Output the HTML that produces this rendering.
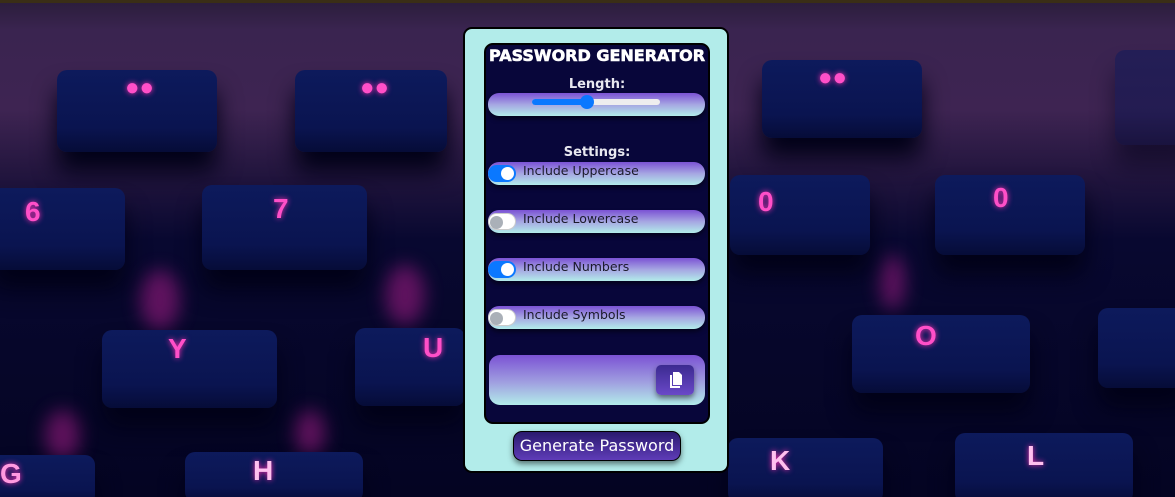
<!DOCTYPE html>
<html><head><meta charset="utf-8"><style>
*{box-sizing:border-box;margin:0;padding:0}
html{background:#050525;width:1175px;height:497px;overflow:hidden}
body{width:1175px;height:497px;overflow:hidden;position:relative;font-family:"Liberation Sans",sans-serif;
background:linear-gradient(180deg,#2a1d3a 0,#3a2450 30px,#3e2452 110px,#24163f 170px,#080830 240px,#040422 497px);}
.strip{position:absolute;left:0;top:0;width:1175px;height:3px;background:#3a2e16}
.k{position:absolute;border-radius:10px;background:linear-gradient(180deg,#0d1a5c 0,#0a1450 70%,#060c38 100%);box-shadow:0 20px 24px #020218}
.l{position:absolute;color:#ff4fc8;font-weight:bold;font-size:28px;text-shadow:0 0 6px #ff2fb0;font-family:"Liberation Sans",sans-serif}
.g{position:absolute;background:#9a1a80;filter:blur(9px);opacity:.6;border-radius:50%}
.card{position:absolute;left:463px;top:27px;width:266px;height:446px;background:#b2ecea;border:2px solid #000;border-radius:9px}
.panel{position:absolute;left:19px;top:14px;width:226px;height:381px;background:#08063a;border:2px solid #000;border-radius:9px}
.title{position:absolute;left:0;width:100%;top:1px;text-align:center;color:#fff;font-weight:900;font-size:16px;letter-spacing:0;font-family:"DejaVu Sans",sans-serif;-webkit-text-stroke:.6px #fff}
.lab{position:absolute;left:0;width:100%;text-align:center;color:#e8e8f0;font-weight:bold;font-size:13px;font-family:"DejaVu Sans",sans-serif}
.bar{position:absolute;left:2px;width:217px;height:23px;border-radius:11px;background:linear-gradient(180deg,#7b52d4 0,#a6a6e2 50%,#b2ecea 100%);box-shadow:0 3px 5px rgba(0,0,0,.5)}
.tg{position:absolute;left:0;top:3px;width:28px;height:17px;border-radius:9px}
.tg.on{background:#0a78ff}.tg.off{background:#fff;border:1px solid #ccc}
.tg i{position:absolute;top:2px;width:13px;height:13px;border-radius:50%}
.tg.on i{right:2px;background:#fff}.tg.off i{left:1px;background:#aab0b8}
.tx{position:absolute;left:35px;top:1px;color:#1a1a2a;font-family:"DejaVu Sans",sans-serif;font-size:12.5px}
.out{position:absolute;left:3px;top:310px;width:216px;height:50px;border-radius:11px;background:linear-gradient(180deg,#7b52d4 0,#a0a0e0 55%,#b2ecea 100%)}
.copy{position:absolute;left:167px;top:10px;width:38px;height:30px;border-radius:5px;background:linear-gradient(180deg,#3b2a90,#6a48c8);box-shadow:0 3px 6px rgba(0,0,0,.5)}
.gen{position:absolute;left:48px;top:402px;width:168px;height:30px;border:1px solid #000;border-radius:9px;background:linear-gradient(180deg,#2a1a6e,#5f3cb8);color:#fff;font-size:16px;text-align:center;line-height:28px;font-family:"DejaVu Sans",sans-serif;box-shadow:0 3px 6px rgba(0,0,0,.5)}
</style></head><body>
<div class="strip"></div>
<div class="k" style="left:57px;top:70px;width:160px;height:82px"></div>
<div class="k" style="left:295px;top:70px;width:152px;height:82px"></div>
<div class="k" style="left:762px;top:60px;width:160px;height:78px"></div>
<div class="k" style="left:1115px;top:50px;width:80px;height:95px;opacity:.5"></div>
<div class="g" style="left:140px;top:270px;width:40px;height:60px"></div>
<div class="g" style="left:385px;top:265px;width:40px;height:60px"></div>
<div class="g" style="left:880px;top:255px;width:25px;height:55px"></div>
<div class="g" style="left:45px;top:410px;width:35px;height:50px"></div>
<div class="g" style="left:295px;top:410px;width:30px;height:45px"></div>
<div class="k" style="left:-10px;top:188px;width:135px;height:82px"></div>
<div class="k" style="left:202px;top:185px;width:165px;height:85px"></div>
<div class="k" style="left:730px;top:175px;width:140px;height:80px"></div>
<div class="k" style="left:935px;top:175px;width:150px;height:80px"></div>
<div class="k" style="left:102px;top:330px;width:175px;height:78px"></div>
<div class="k" style="left:355px;top:328px;width:110px;height:78px"></div>
<div class="k" style="left:852px;top:315px;width:178px;height:78px"></div>
<div class="k" style="left:1098px;top:308px;width:90px;height:80px"></div>
<div class="k" style="left:-10px;top:455px;width:105px;height:50px"></div>
<div class="k" style="left:185px;top:452px;width:178px;height:50px"></div>
<div class="k" style="left:728px;top:438px;width:155px;height:65px"></div>
<div class="k" style="left:955px;top:433px;width:178px;height:70px"></div>
<div class="l" style="left:125px;top:74px;font-size:24px">●●</div>
<div class="l" style="left:360px;top:74px;font-size:24px">●●</div>
<div class="l" style="left:818px;top:64px;font-size:24px">●●</div>
<div class="l" style="left:25px;top:196px">6</div>
<div class="l" style="left:273px;top:193px">7</div>
<div class="l" style="left:758px;top:186px">0</div>
<div class="l" style="left:993px;top:182px">0</div>
<div class="l" style="left:168px;top:333px">Y</div>
<div class="l" style="left:423px;top:332px">U</div>
<div class="l" style="left:915px;top:320px">O</div>
<div class="l" style="left:0px;top:458px;color:#ff9ae0">G</div>
<div class="l" style="left:253px;top:455px;color:#ffc0ef">H</div>
<div class="l" style="left:770px;top:445px;color:#ffc0ef">K</div>
<div class="l" style="left:1027px;top:440px;color:#ffc0ef">L</div>

<div class="card">
 <div class="panel">
  <div class="title">PASSWORD GENERATOR</div>
  <div class="lab" style="top:32px">Length:</div>
  <div class="bar" style="top:48px">
   <div style="position:absolute;left:44px;top:6px;width:128px;height:6px;border-radius:3px;background:#eee"></div>
   <div style="position:absolute;left:44px;top:6px;width:55px;height:6px;border-radius:3px;background:#0a78ff"></div>
   <div style="position:absolute;left:92px;top:2px;width:14px;height:14px;border-radius:50%;background:#0a78ff"></div>
  </div>
  <div class="lab" style="top:100px">Settings:</div>
  <div class="bar" style="top:117px"><div class="tg on"><i></i></div><div class="tx">Include Uppercase</div></div>
  <div class="bar" style="top:165px"><div class="tg off"><i></i></div><div class="tx">Include Lowercase</div></div>
  <div class="bar" style="top:213px"><div class="tg on"><i></i></div><div class="tx">Include Numbers</div></div>
  <div class="bar" style="top:261px"><div class="tg off"><i></i></div><div class="tx">Include Symbols</div></div>
  <div class="out"><div class="copy">
   <svg width="38" height="30" viewBox="0 0 38 30"><path d="M14 10h2v11h8v2H14z" fill="#fff"/><path d="M17 7h6l3 3v10h-9z" fill="#fff"/></svg>
  </div></div>
 </div>
 <div class="gen">Generate Password</div>
</div>
</body></html>
